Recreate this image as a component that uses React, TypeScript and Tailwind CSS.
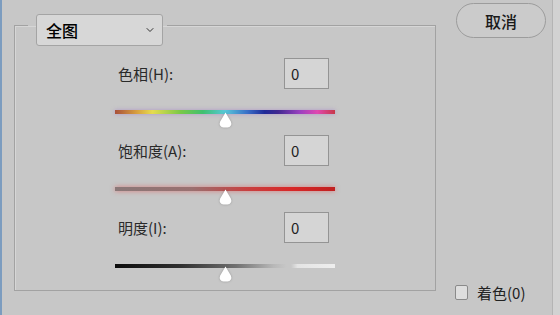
import { ChevronDown } from "lucide-react";

const FONT = { fontFamily: '"Noto Sans CJK SC", "Noto Sans", sans-serif' };

function Thumb() {
  return (
    <svg width="13" height="16" viewBox="0 0 13 16" className="drop-shadow-[0_0_1px_rgba(0,0,0,0.25)]">
      <path d="M6.5 0.5 L11.8 9.5 Q12.8 11.5 11.8 13.6 Q10.8 15.5 8.6 15.5 H4.4 Q2.2 15.5 1.2 13.6 Q0.2 11.5 1.2 9.5 Z" fill="#ffffff" />
    </svg>
  );
}

type Row = { label: string; track: string; glow: string };

const rows: Row[] = [
  {
    label: "色相(H):",
    track:
      "bg-[linear-gradient(90deg,#a8503a_0%,#d8a040_10%,#e6dc50_17%,#78c848_30%,#40c070_40%,#58c8d8_50%,#3a70c8_60%,#202a98_68%,#402890_74%,#9a40c0_84%,#e048b0_92%,#c83848_100%)]",
    glow: "shadow-[0_0_4px_rgba(160,120,200,0.6)]",
  },
  {
    label: "饱和度(A):",
    track: "bg-[linear-gradient(90deg,#8a7878_0%,#9a7070_35%,#c84040_60%,#d82828_80%,#c02020_100%)]",
    glow: "shadow-[0_0_5px_rgba(230,60,60,0.55)]",
  },
  {
    label: "明度(I):",
    track:
      "bg-[linear-gradient(90deg,#0c0c0c_0%,#303030_30%,#707070_55%,#b8b8b8_72%,#c7c7c7_78%,#c7c7c7_80%,#e4e4e4_83%,#eeeeee_100%)]",
    glow: "",
  },
];

export default function App() {
  return (
    <div className="flex h-[315px] w-[560px] overflow-hidden bg-[#c7c7c7] text-[#1e1e1e]" style={FONT}>
      <div className="w-[2px] shrink-0 bg-[#7c9cbf]" />

      <fieldset className="ml-[12px] mt-[5px] h-[286px] w-[422px] shrink-0 border border-[#a2a2a2] p-0 shadow-[inset_1px_1px_0_#d6d6d6]">
        <legend className="ml-[13px] pl-[8px] pr-[4px] pt-[9px]">
          <div className="flex h-[32px] w-[127px] items-center justify-between rounded-[3px] border border-[#a4a4a4] bg-[#d7d7d7] pl-[9px] pr-[6px]">
            <span className="text-[16px] font-medium leading-none text-black">全图</span>
            <ChevronDown size={12} strokeWidth={2} className="text-[#333]" />
          </div>
        </legend>

        <div className="pt-[12px]">
          {rows.map((r) => (
            <div key={r.label} className="ml-[100px] h-[77px] w-[220px]">
              <div className="flex h-[31px] items-center justify-between pr-[6px]">
                <span className="ml-[3px] text-[15px] leading-none text-[#2a2a2a]">{r.label}</span>
                <div className="flex h-[31px] w-[45px] items-center border border-[#949494] bg-[#d5d5d5] pl-[6px] text-[15px] leading-none text-[#222]">
                  0
                </div>
              </div>
              <div className={`mt-[21px] h-[4px] w-full ${r.track} ${r.glow}`} />
              <div className="-mt-[2px] flex justify-center">
                <Thumb />
              </div>
            </div>
          ))}
        </div>
      </fieldset>

      <div className="flex flex-1 flex-col">
        <button className="ml-[20px] mt-[3px] flex h-[35px] w-[90px] items-center justify-center rounded-full border border-[#9c9c9c] bg-[#cbcbcb] text-[16px] font-medium leading-none text-[#1a1a1a]">
          取消
        </button>
        <div className="mb-[15px] ml-[19px] mt-auto flex items-center gap-[9px]">
          <div className="h-[15px] w-[13px] rounded-[2px] border border-[#8a8a8a] bg-[#dedede]" />
          <span className="text-[15px] leading-none text-[#222]">着色(0)</span>
        </div>
      </div>

      <div className="w-[8px] shrink-0 border-l border-[#b4b4b4] bg-[#d2d2d2]" />
    </div>
  );
}
